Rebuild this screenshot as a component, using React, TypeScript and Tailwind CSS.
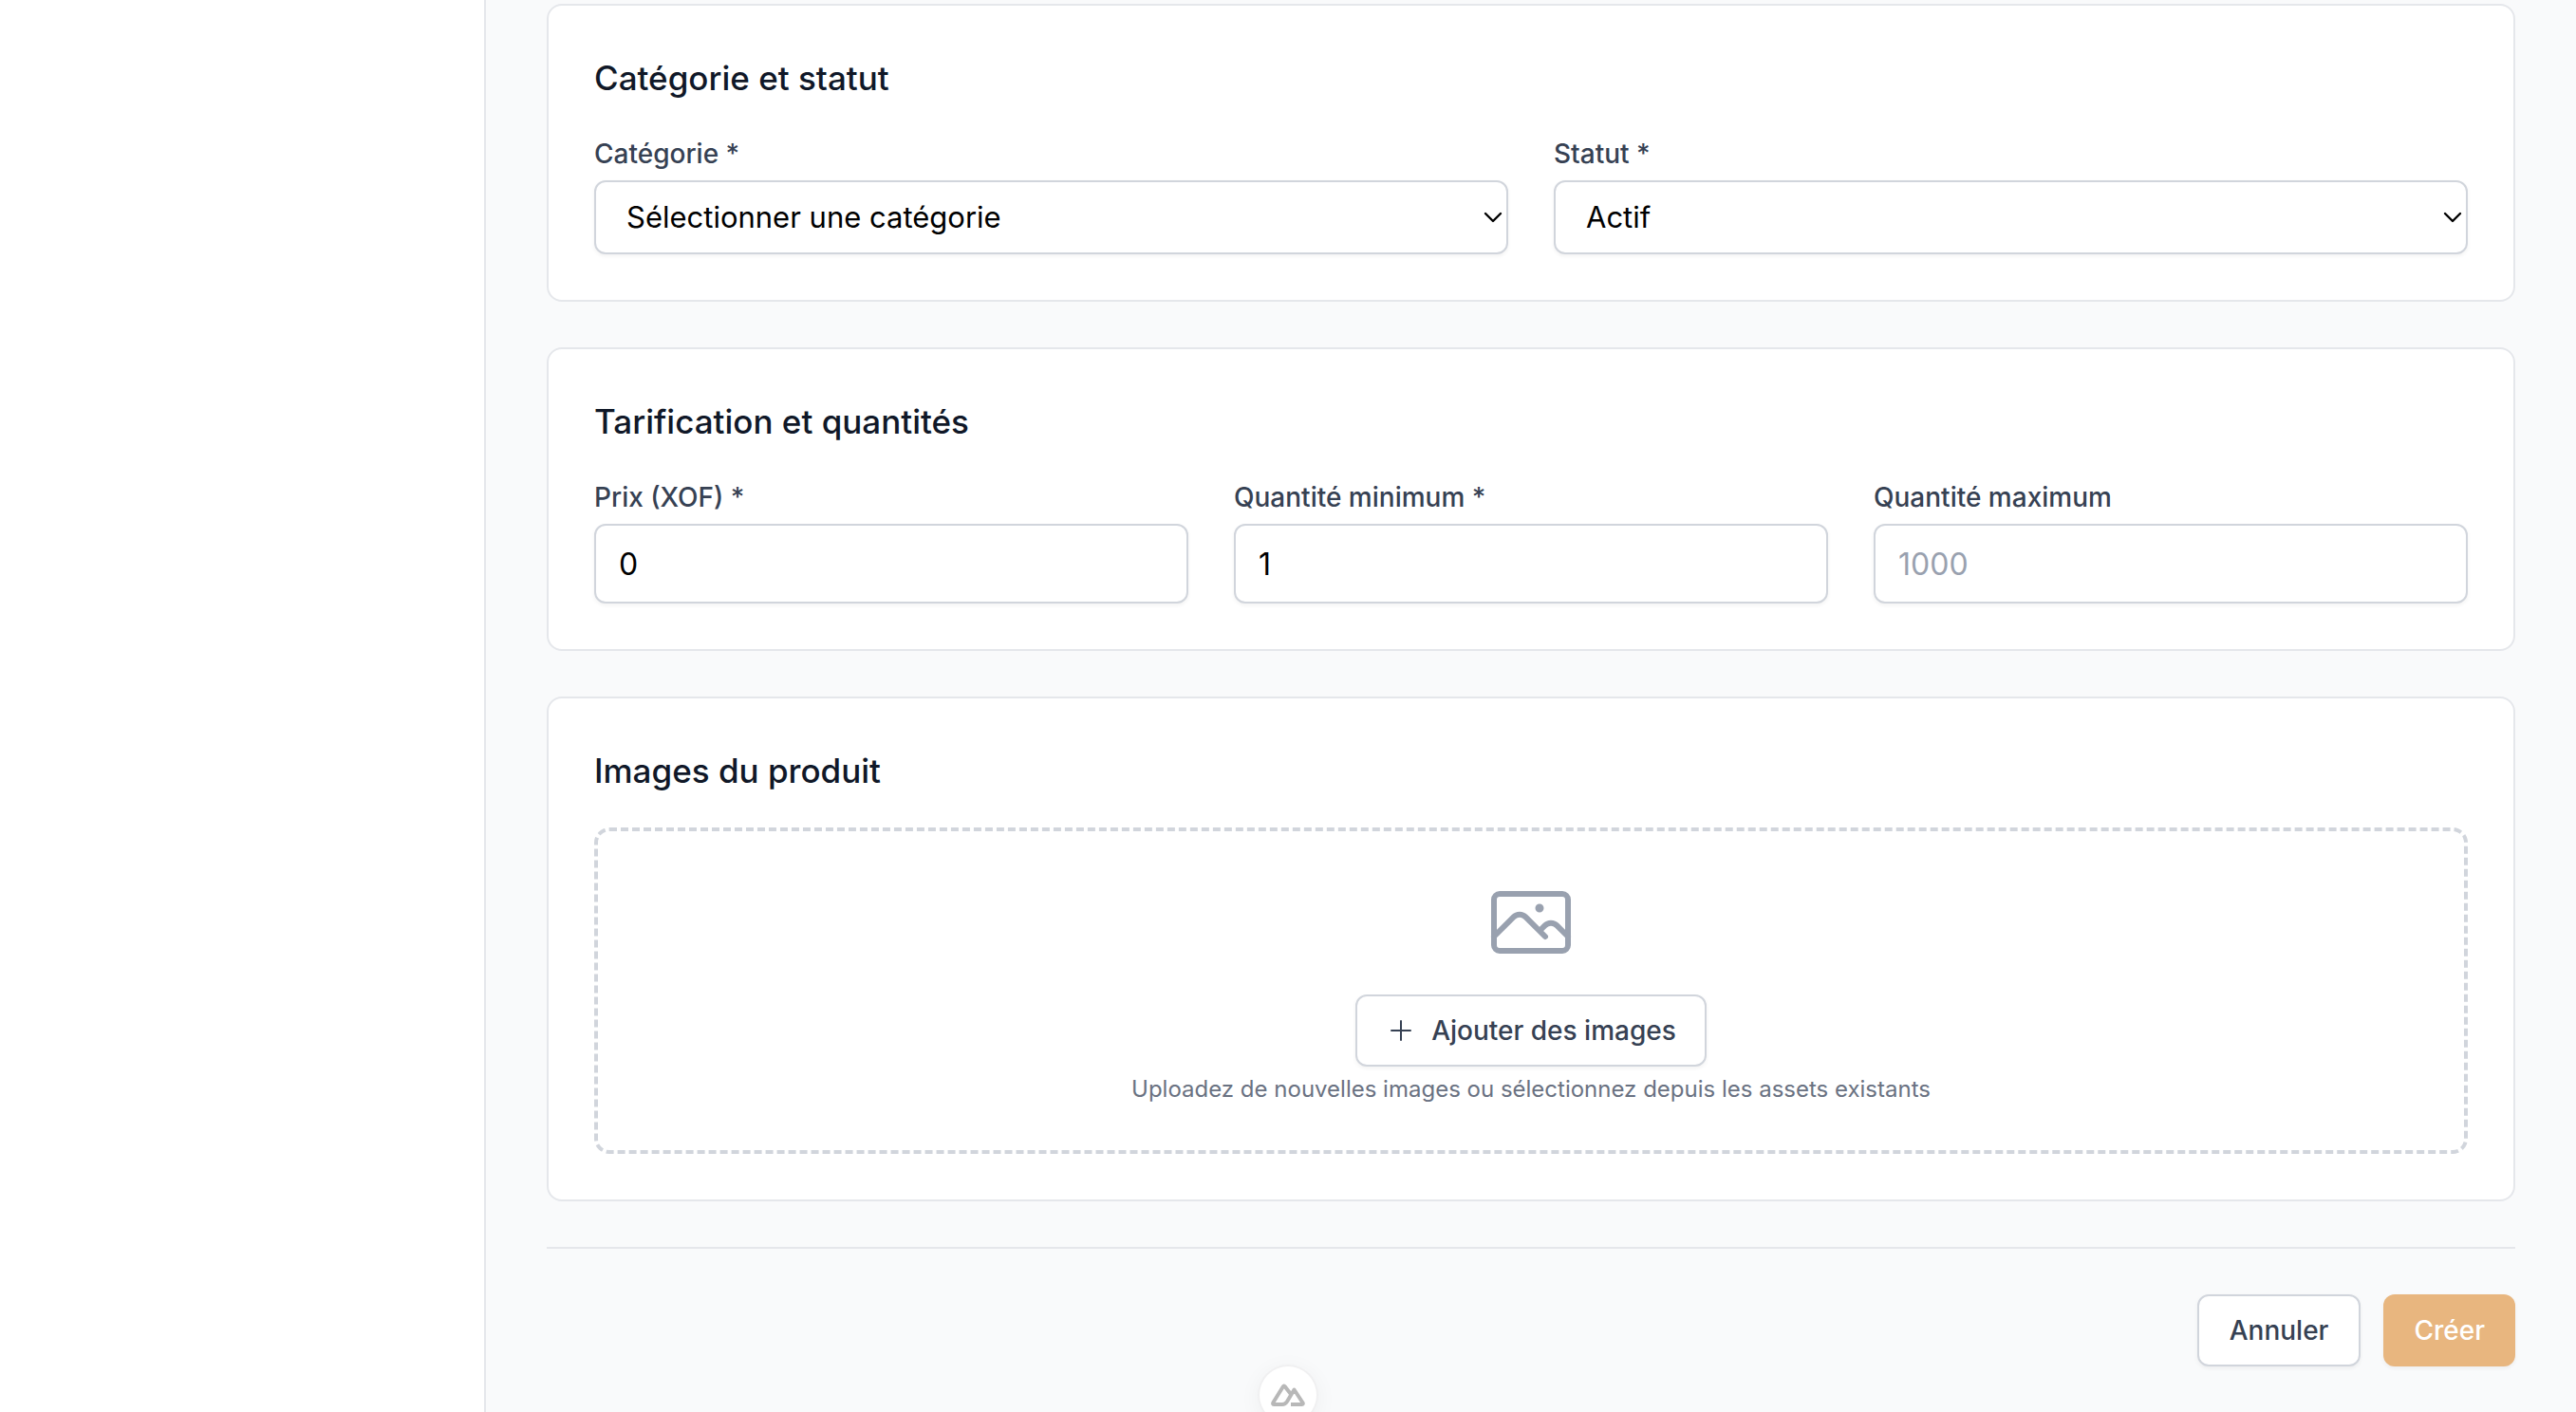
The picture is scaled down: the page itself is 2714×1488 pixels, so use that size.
import type { ReactNode } from "react";

const controlBase =
  "block w-full rounded-xl border-2 border-gray-300 bg-white leading-[48px] text-black shadow-[0_2px_4px_rgba(0,0,0,0.05)]";

function Card({ title, children }: { title: string; children: ReactNode }) {
  return (
    <section className="rounded-2xl border-2 border-gray-200 bg-white p-12">
      <h3 className="mb-8 text-[35px] leading-[56px] font-medium text-gray-900">{title}</h3>
      {children}
    </section>
  );
}

function Field({ id, label, children }: { id: string; label: string; children: ReactNode }) {
  return (
    <div className="min-w-0">
      <label htmlFor={id} className="mb-2 block text-[28px] leading-10 font-medium text-gray-700">
        {label}
      </label>
      {children}
    </div>
  );
}

function SelectField({ id, label, option }: { id: string; label: string; option: string }) {
  return (
    <Field id={id} label={label}>
      <div className="relative">
        <select id={id} className={`${controlBase} h-[78px] appearance-none pr-12 pl-8 text-[31px]`}>
          <option>{option}</option>
        </select>
        <svg
          className="pointer-events-none absolute top-1/2 right-1.5 h-3 w-5 -translate-y-1/2"
          viewBox="0 0 20 12"
          fill="none"
          stroke="black"
          strokeWidth="2.4"
          strokeLinecap="round"
          strokeLinejoin="round"
          aria-hidden="true"
        >
          <path d="M2 2l8 8 8-8" />
        </svg>
      </div>
    </Field>
  );
}

function NumberField({ id, label, value, placeholder }: { id: string; label: string; value?: string; placeholder?: string }) {
  return (
    <Field id={id} label={label}>
      <input
        id={id}
        type="text"
        inputMode="numeric"
        defaultValue={value}
        placeholder={placeholder}
        className={`${controlBase} h-[84px] px-6 text-[32px] placeholder:text-gray-400`}
      />
    </Field>
  );
}

const outlineButton =
  "inline-flex h-[76px] items-center rounded-xl border-2 border-gray-300 bg-white text-[28px] leading-10 font-medium text-gray-700 shadow-[0_2px_4px_rgba(0,0,0,0.05)]";

export default function App() {
  return (
    <div className="flex h-screen overflow-hidden bg-gray-50 font-['Inter',sans-serif]">
      <aside className="w-[512px] shrink-0 border-r-2 border-gray-200 bg-white" />
      <main className="min-w-0 flex-1 px-16 pt-1">
        <form className="flex flex-col gap-12">
          <Card title="Catégorie et statut">
            <div className="grid grid-cols-2 gap-12">
              <SelectField id="category" label="Catégorie *" option="Sélectionner une catégorie" />
              <SelectField id="status" label="Statut *" option="Actif" />
            </div>
          </Card>
          <Card title="Tarification et quantités">
            <div className="grid grid-cols-3 gap-12">
              <NumberField id="price" label="Prix (XOF) *" value="0" />
              <NumberField id="min" label="Quantité minimum *" value="1" />
              <NumberField id="max" label="Quantité maximum" placeholder="1000" />
            </div>
          </Card>
          <Card title="Images du produit">
            <div className="flex flex-col items-center rounded-2xl border-4 border-dashed border-gray-300 p-12">
              <svg
                className="size-24 text-gray-400"
                viewBox="0 0 24 24"
                fill="none"
                stroke="currentColor"
                strokeWidth="1.5"
                strokeLinecap="round"
                strokeLinejoin="round"
                aria-hidden="true"
              >
                <path d="m2.25 15.75 5.159-5.159a2.25 2.25 0 0 1 3.182 0l5.159 5.159m-1.5-1.5 1.409-1.409a2.25 2.25 0 0 1 3.182 0l2.909 2.909m-18 3.75h16.5a1.5 1.5 0 0 0 1.5-1.5V6a1.5 1.5 0 0 0-1.5-1.5H3.75A1.5 1.5 0 0 0 2.25 6v12a1.5 1.5 0 0 0 1.5 1.5Zm10.5-11.25h.008v.008h-.008V8.25Zm.375 0a.375.375 0 1 1-.75 0 .375.375 0 0 1 .75 0Z" />
              </svg>
              <button type="button" className={`${outlineButton} mt-7 gap-4 px-[30px]`}>
                <svg
                  className="size-8"
                  viewBox="0 0 24 24"
                  fill="none"
                  stroke="currentColor"
                  strokeWidth="1.5"
                  strokeLinecap="round"
                  aria-hidden="true"
                >
                  <path d="M12 4.5v15m7.5-7.5h-15" />
                </svg>
                Ajouter des images
              </button>
              <p className="mt-2 text-2xl leading-8 text-gray-500">
                Uploadez de nouvelles images ou sélectionnez depuis les assets existants
              </p>
            </div>
          </Card>
          <div className="flex justify-end gap-6 border-t-2 border-gray-200 pt-12">
            <button type="button" className={`${outlineButton} px-8`}>
              Annuler
            </button>
            <button
              type="submit"
              className="inline-flex h-[76px] items-center rounded-xl bg-[#e8b67f] px-8 text-[28px] leading-10 font-medium text-white shadow-[0_2px_4px_rgba(0,0,0,0.05)]"
            >
              Créer
            </button>
          </div>
        </form>
      </main>
      <button
        type="button"
        aria-label="Nuxt DevTools"
        className="fixed -bottom-3 left-1/2 flex size-15 -translate-x-1/2 items-center justify-center rounded-full bg-white shadow-[0_0_0_2px_#f0f0f1,0_4px_24px_rgba(0,0,0,0.06)]"
      >
        <svg
          className="h-6 w-9"
          viewBox="0 0 36 24"
          fill="none"
          stroke="#b8b8b8"
          strokeWidth="4"
          strokeLinecap="butt"
          strokeLinejoin="round"
          aria-hidden="true"
        >
          <path d="M20.5 10.5L14.8 3.2Q13.8 1.6 12.8 3.2L2.4 20Q1.5 22 3.5 22H12Q15 22 17 19L24.5 6.5L33.4 20Q34.5 22 32.5 22H21" />
        </svg>
      </button>
    </div>
  );
}
